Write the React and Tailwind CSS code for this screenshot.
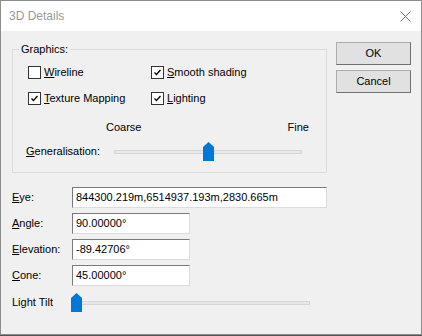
import React from "react";

const font = { fontFamily: '"Liberation Sans", Arial, sans-serif' };

function Check({ checked }) {
  return (
    <div className="w-[13px] h-[13px] border border-[#333333] bg-white flex items-center justify-center shrink-0">
      {checked && (
        <svg width="9" height="9" viewBox="0 0 9 9">
          <path d="M1.5 4.5 L3.5 6.5 L7.5 2" fill="none" stroke="#000" strokeWidth="1.3" />
        </svg>
      )}
    </div>
  );
}

function CheckRow({ checked, u, rest, w }) {
  return (
    <div className={`flex items-center gap-[3px] ${w}`}>
      <Check checked={checked} />
      <span className="leading-[13px]">
        <span className="underline">{u}</span>
        {rest}
      </span>
    </div>
  );
}

function Thumb() {
  return (
    <svg width="11" height="19" viewBox="0 0 11 19" className="block">
      <polygon points="0,5 5.5,0 11,5 11,19 0,19" fill="#0078d7" />
    </svg>
  );
}

function Slider({ width, pos }) {
  return (
    <div className="relative h-[19px]" style={{ width }}>
      <div className="absolute left-0 right-0 top-[8px] h-[4px] bg-[#e7e7e7] border border-[#d6d6d6]" />
      <div className="absolute top-0" style={{ left: pos }}>
        <Thumb />
      </div>
    </div>
  );
}

function Field({ u, rest, value, w }) {
  return (
    <div className="flex items-center h-[21px]">
      <div className="w-[60px] leading-[13px]">
        <span className="underline">{u}</span>
        {rest}
      </div>
      <div
        className={`h-[21px] bg-white border border-t-[#7a7a7a] border-l-[#7a7a7a] border-r-[#dcdcdc] border-b-[#dcdcdc] flex items-center pl-[3px] ${w}`}
      >
        {value}
      </div>
    </div>
  );
}

export default function App() {
  return (
    <div className="w-[422px] h-[336px] bg-[#5d5050]" style={font}>
      <div className="w-[422px] h-[335px] border border-[#8c8c8c] bg-[#f0f0f0] flex flex-col text-[11px] text-black">
        <div className="h-[30px] bg-white flex items-center justify-between pl-[8px] pr-[10px] shrink-0">
          <span className="text-[12px] text-[#999999]">3D Details</span>
          <svg width="11" height="11" viewBox="0 0 11 11">
            <path d="M0.5 0.5 L10.5 10.5 M10.5 0.5 L0.5 10.5" stroke="#707070" strokeWidth="1" />
          </svg>
        </div>
        <div className="flex flex-1">
          <div className="pl-[11px] pt-[18px] w-[326px]">
            <div className="relative w-[315px] h-[124px] border border-[#dcdcdc] flex flex-col">
              <span className="absolute -top-[7px] left-[6px] px-[2px] bg-[#f0f0f0] leading-[13px]">Graphics:</span>
              <div className="flex pl-[15px] mt-[16px]">
                <CheckRow checked={false} u="W" rest="ireline" w="w-[123px]" />
                <CheckRow checked={true} u="S" rest="mooth shading" w="" />
              </div>
              <div className="flex pl-[15px] mt-[13px]">
                <CheckRow checked={true} u="T" rest="exture Mapping" w="w-[123px]" />
                <CheckRow checked={true} u="L" rest="ighting" w="" />
              </div>
              <div className="flex mt-[16px] leading-[13px]">
                <span className="ml-[93px]">Coarse</span>
                <span className="ml-auto mr-[17px]">Fine</span>
              </div>
              <div className="flex items-center mt-[8px] pl-[13px]">
                <div className="w-[88px] leading-[13px]">
                  <span className="underline">G</span>eneralisation:
                </div>
                <Slider width={188} pos={89} />
              </div>
            </div>
            <div className="flex flex-col gap-[5px] mt-[14px]">
              <Field u="E" rest="ye:" value="844300.219m,6514937.193m,2830.665m" w="w-[255px]" />
              <Field u="A" rest="ngle:" value="90.00000°" w="w-[118px]" />
              <Field u="E" rest="levation:" value="-89.42706°" w="w-[118px]" />
              <Field u="C" rest="one:" value="45.00000°" w="w-[118px]" />
            </div>
            <div className="flex items-center mt-[7px]">
              <div className="w-[59px] leading-[13px]">Light Tilt</div>
              <Slider width={239} pos={0} />
            </div>
          </div>
          <div className="pl-[9px] pt-[11px] flex flex-col gap-[5px]">
            <div className="w-[75px] h-[23px] bg-[#e1e1e1] border border-[#adadad] border-r-[#707070] border-b-[#707070] flex items-center justify-center">
              OK
            </div>
            <div className="w-[75px] h-[23px] bg-[#e1e1e1] border border-[#adadad] border-r-[#707070] border-b-[#707070] flex items-center justify-center">
              Cancel
            </div>
          </div>
        </div>
      </div>
    </div>
  );
}
